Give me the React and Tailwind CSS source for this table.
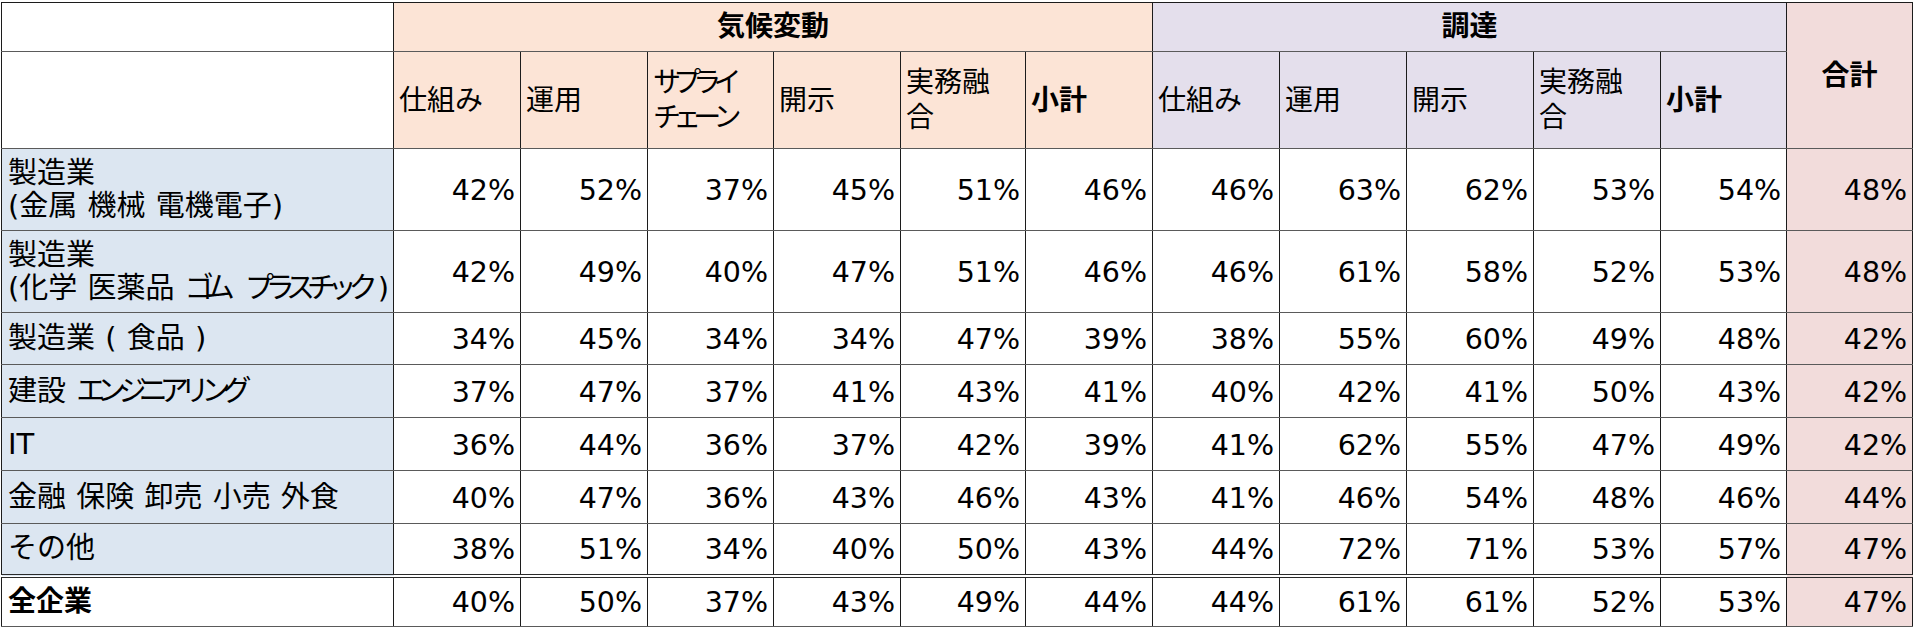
import React from "react";

const widths = [392, 127, 127, 126, 127, 125, 127, 127, 127, 127, 127, 126, 126];

const rows = [
  { label: ["製造業", "(金属 機械 電機電子)"], h: "h-[82px]", v: [42, 52, 37, 45, 51, 46, 46, 63, 62, 53, 54, 48] },
  { label: ["製造業", "(化学 医薬品 ゴム プラスチック)"], h: "h-[82px]", v: [42, 49, 40, 47, 51, 46, 46, 61, 58, 52, 53, 48] },
  { label: ["製造業 ( 食品 )"], h: "h-[52px]", v: [34, 45, 34, 34, 47, 39, 38, 55, 60, 49, 48, 42] },
  { label: ["建設 エンジニアリング"], h: "h-[53px]", v: [37, 47, 37, 41, 43, 41, 40, 42, 41, 50, 43, 42] },
  { label: ["IT"], h: "h-[53px]", v: [36, 44, 36, 37, 42, 39, 41, 62, 55, 47, 49, 42] },
  { label: ["金融 保険 卸売 小売 外食"], h: "h-[53px]", v: [40, 47, 36, 43, 46, 43, 41, 46, 54, 48, 46, 44] },
  { label: ["その他"], h: "h-[52px]", v: [38, 51, 34, 40, 50, 43, 44, 72, 71, 53, 57, 47] },
];

const total = [40, 50, 37, 43, 49, 44, 44, 61, 61, 52, 53, 47];

const cell = "border border-x-[#1c1c1c] border-y-[#5a5a5a] p-0";

const hdr2Climate = [["仕組み"], ["運用"], ["サプライ", "チェーン"], ["開示"], ["実務融", "合"], ["小計"]];
const hdr2Proc = [["仕組み"], ["運用"], ["開示"], ["実務融", "合"], ["小計"]];

// Narrow katakana runs (the source font sets kana proportionally)
function Kana({ text }) {
  const parts = text.split(/([\u30A0-\u30FF]+)/);
  return parts.map((p, i) => {
    if (i % 2 === 1 && p.length > 1) {
      return (
        <React.Fragment key={i}>
          <span className="tracking-[-0.28em]">{p.slice(0, -1)}</span>
          {p.slice(-1)}
        </React.Fragment>
      );
    }
    return <React.Fragment key={i}>{p}</React.Fragment>;
  });
}

function HeadCell({ lines, bg }) {
  const bold = lines[0] === "小計";
  return (
    <td className={`${cell} ${bg} align-middle text-left pl-[5px] ${bold ? "font-bold" : "font-normal"}`}>
      <div className="leading-[35px]">
        {lines.map((l, i) => (
          <div key={i}>
            <Kana text={l} />
          </div>
        ))}
      </div>
    </td>
  );
}

function Num({ v, pink, last }) {
  return (
    <td
      className={`${cell} ${pink ? "bg-[#f2dcdb]" : "bg-white"} ${last ? "border-t-[4px] border-double border-t-[#2a2a2a]" : ""} text-right align-middle pr-[5px] pt-[4px] text-[28.5px]`}
    >
      {v}%
    </td>
  );
}

export default function App() {
  return (
    <div className="bg-white w-[1914px] h-[637px] overflow-hidden">
      <div className="pt-[2px] pl-[1px]">
        <table className="table-fixed border-collapse w-[1912px] text-[28px] text-black font-['DejaVu_Sans','Noto_Sans_CJK_JP',sans-serif]">
          <colgroup>
            {widths.map((w, i) => (
              <col key={i} style={{ width: w }} />
            ))}
          </colgroup>
          <tbody>
            <tr className="h-[49px]">
              <td className={`${cell} border-t-[#1c1c1c] bg-white`}></td>
              <td colSpan={6} className={`${cell} border-t-[#1c1c1c] bg-[#fce4d6] text-center align-middle font-bold`}>
                気候変動
              </td>
              <td colSpan={5} className={`${cell} border-t-[#1c1c1c] bg-[#e4dfec] text-center align-middle font-bold`}>
                調達
              </td>
              <td rowSpan={2} className={`${cell} border-t-[#1c1c1c] bg-[#f2dcdb] text-center align-middle font-bold`}>
                合計
              </td>
            </tr>
            <tr className="h-[97px]">
              <td className={`${cell} bg-white`}></td>
              {hdr2Climate.map((l, i) => (
                <HeadCell key={i} lines={l} bg="bg-[#fce4d6]" />
              ))}
              {hdr2Proc.map((l, i) => (
                <HeadCell key={i} lines={l} bg="bg-[#e4dfec]" />
              ))}
            </tr>
            {rows.map((r, ri) => (
              <tr key={ri} className={r.h}>
                <td className={`${cell} bg-[#dce6f1] text-left align-middle pl-[6px] text-[29px] [word-spacing:1px]`}>
                  <div className="leading-[33px]">
                    {r.label.map((l, i) => (
                      <div key={i} className="whitespace-pre">
                        <Kana text={l} />
                      </div>
                    ))}
                  </div>
                </td>
                {r.v.map((v, i) => (
                  <Num key={i} v={v} pink={i === 11} />
                ))}
              </tr>
            ))}
            <tr className="h-[51px]">
              <td className={`${cell} border-t-[4px] border-double border-t-[#2a2a2a] bg-white text-left align-middle pl-[6px] font-bold`}>
                全企業
              </td>
              {total.map((v, i) => (
                <Num key={i} v={v} pink={i === 11} last />
              ))}
            </tr>
          </tbody>
        </table>
      </div>
    </div>
  );
}
